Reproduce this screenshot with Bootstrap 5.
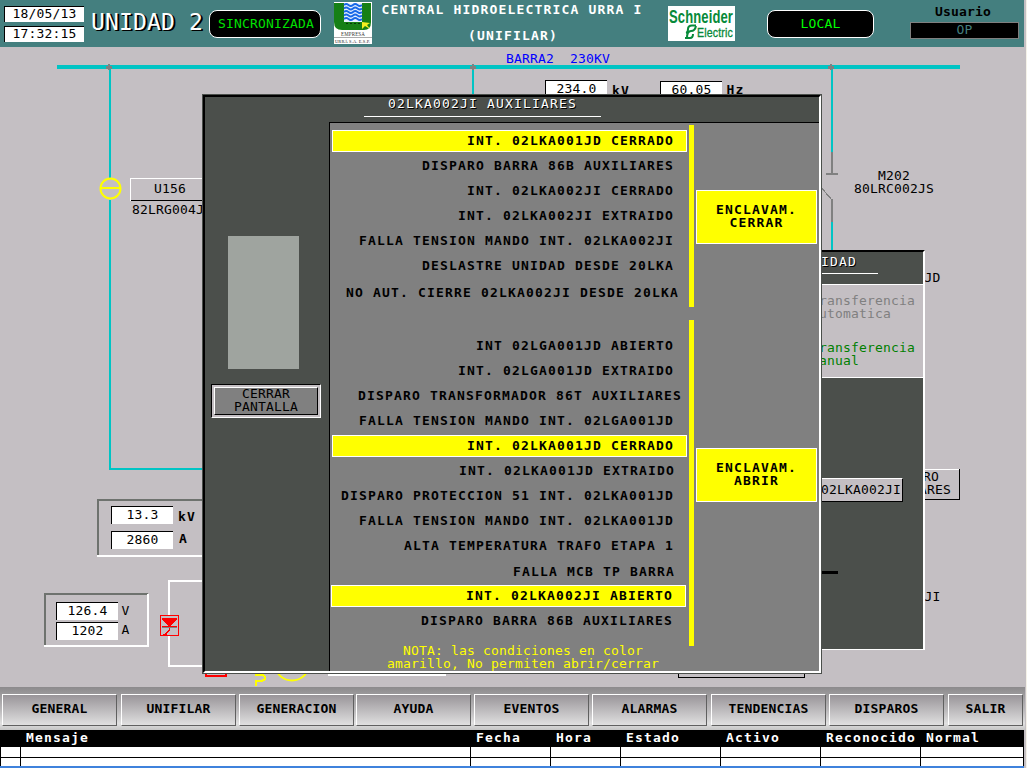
<!DOCTYPE html>
<html lang="es">
<head>
<meta charset="utf-8">
<meta name="viewport" content="width=device-width, initial-scale=1">
<title>Unidad 2 - Unifilar</title>
<link href="https://cdn.jsdelivr.net/npm/bootstrap@5.3.0/dist/css/bootstrap.min.css" rel="stylesheet">
<style>
:root{--teal:#447f7f;--bg:#c4bfc3;--dark:#4b4f4b;--mid:#808080;--cy:#00c4c4}
body{width:1027px;height:768px;overflow:hidden;background:#f4f1e8;color:#000;font:13px/13px "DejaVu Sans Mono","Liberation Mono",monospace;letter-spacing:.17px}
.screen{width:1026px;height:768px;background:var(--bg)}
.b9{font-weight:700;letter-spacing:1.17px}
.top-bar{width:1024px;height:47px;background:var(--teal)}
.clock{margin:6px 7px 0 4px;width:80px}
.stamp{height:16px;background:#fff;border:1px solid #000;border-width:1px 0 0 1px;text-align:center;line-height:13px}
.unit{width:118px;font-size:23px;line-height:24px;letter-spacing:.15px;margin-top:10px;color:#fff;text-shadow:1px 1px #000,2px 1px #000;white-space:pre}
.pill{height:28px;margin-top:10px;background:#000;border:1px solid #fff;border-radius:8px;color:#00e000;text-align:center;line-height:26px}
.pill-sync{width:112px;padding-left:2px}.pill-local{width:107px;margin-left:32px;color:#0f0}
.logo-urra{margin:2px 0 0 13px}
.heading{width:280px;margin:3px 0 0;text-align:center;color:#fff;white-space:nowrap}
.heading div+div{margin-top:13px;padding-left:2px}
.logo-se{margin:6px 0 0 16px}
.user{width:109px;margin:5px 0 0 36px;text-align:center}
.user>:first-child{padding-right:3px}
.user-name{height:17px;margin-top:4px;border:1px solid var(--mid);background:#000;color:var(--teal);line-height:14px}
.scene{height:640px}
.scene>svg{display:block}
.scene text{white-space:pre}
.val{font-size:13px;text-anchor:middle}
.unidad-win{left:700px;top:203px;width:225px;height:400px;background:var(--dark);border-top:2px solid #000;border-right:2px solid #fff;border-bottom:1px solid #fff}
.win-title{color:#fff;text-shadow:1px 1px #000;letter-spacing:1.17px}
.unidad-win .win-title{height:22px;padding:3px 0 0 103px;width:178px;border-bottom:1px solid #fff}
.mode{margin-top:10px;height:94px;border:1px solid #fff;border-width:1px 0;background:var(--bg);color:var(--mid);padding:9px 0 0 111px}
.mode .manual{margin-top:21px;color:#008000}
.tag-int{width:90px;height:24px;margin:100px 0 0 113px;background:var(--bg);border:1px solid #000;border-width:1px 1px 1px 0;border-top-color:#fff;text-align:right;line-height:21px;padding-right:1px}
.tag-bar{width:30px;height:3px;background:#000;margin:69px 0 0 108px}
.dialog{left:202px;top:47px;width:620px;height:580px;background:var(--dark);border:1px solid var(--dark)}
.dialog-in{width:618px;height:578px;border:2px solid #000;border-right-color:#fff;border-bottom-color:#fff}
.dialog .win-title{height:20px;margin-left:159px;width:237px;padding:0 0 0 24px;border-bottom:1px solid #fff;white-space:nowrap}
.dlg-body{padding-top:5px}
.side{width:124px;padding:114px 0 0 5px}
.lamp{width:71px;height:133px;margin-left:18px;background:#9fa49f}
.close-btn{width:110px;height:34px;margin-top:15px;margin-left:1px;border:1px solid #000;border-right-color:#fff;border-bottom-color:#fff;padding:2px;background:var(--bg)}
.close-btn div{height:28px;border:1px solid #fff;border-right-color:#000;border-bottom-color:#000;background:var(--mid);text-align:center;line-height:13px}
.close-btn span{position:relative;top:-1px}
.sheet{width:490px;height:549px;border:1px solid #000;border-width:1px 0 0 1px;background:var(--mid)}
.conds{width:358px;padding:7px 0 0 2px}
.cond{width:355px;height:22px;margin-bottom:3px;border:1px solid transparent;line-height:20px;text-align:right;padding-right:12px;white-space:nowrap}
.cond.on{background:#ff0;border-color:#fff}
.r5{padding-right:7px}.r8{padding-right:4px}.r1{padding-right:11px}.lf{margin-left:-1px}
.drop{position:relative;top:2px}.drop1{position:relative;top:1px}
.split{height:30px}
.note{color:#ff0;letter-spacing:.17px;text-align:center;margin-top:12px;white-space:nowrap;padding-left:26px}
.rails{width:5px;margin-top:2px;position:relative;left:1px}
.rail-a{height:182px;background:#ff0}.rail-b{height:326px;margin-top:13px;background:#ff0}
.encl{margin:67px 0 0 3px;width:121px}
.encl div{height:54px;border:1px solid #fff;background:#ff0;text-align:center;padding-top:12px}
.encl div+div{margin-top:204px}
.nav-strip{width:1025px;height:43px;padding:7px 0 0 2px;background:linear-gradient(#8c8a8c,#bdbbbd 55%,#e0e0e0 85%,#c4c4c4);}
.key{width:115px;height:32px;margin-right:3px;border:1px solid #fff;border-right:1px solid #606060;border-bottom:1px solid #606060;background:linear-gradient(#999599,#c0bec0 55%,#e0e0e0);font-weight:700;text-align:center;line-height:27px}
.key.g4{margin-right:4px}.key.g2{margin-right:2px}.key.last{width:75px;margin:0}
.alarm{width:1024px;height:38px;background:#fff;border-left:1px solid #000}
.alarm-row{display:grid;grid-template-columns:20px 450px 80px 70px 100px 100px 100px 103px;height:11px;border-bottom:1px solid #000}
.alarm-row>*{border-right:1px solid #000}
.alarm-row.hd{height:17px;background:#000;color:#fff;line-height:15px;padding:0}
.alarm-row.hd>*{padding-left:5px;border:0;white-space:nowrap}
.alarm-row.end{height:8px;border:0}
.os-edge{height:2px;margin-left:-1px;background:#3f82dc}
</style>
</head>
<body>
<div class="screen d-flex flex-column">
<header class="top-bar d-flex align-items-start flex-shrink-0">
  <div class="clock d-flex flex-column gap-1"><div class="stamp">18/05/13</div><div class="stamp">17:32:15</div></div>
  <div class="unit">UNIDAD 2</div>
  <div class="pill pill-sync">SINCRONIZADA</div>
  <svg class="logo-urra flex-shrink-0" width="38" height="42" viewBox="0 0 38 42">
    <rect width="38" height="42" fill="#fff"/>
    <path d="M0 1H10V20H28V1H37V20Q37 28 30 28H8Q0 28 0 20Z" fill="#168016"/>
    <rect x="10" y="1" width="18" height="19" fill="#e6f0ff"/>
    <path fill="none" stroke="#1768e8" stroke-width="1.700" d="M10 3q2.200-2 4.500 0t4.500 0t4.500 0t4.500 0M10 6.500q2.200-2 4.500 0t4.500 0t4.500 0t4.500 0M10 10q2.200-2 4.500 0t4.500 0t4.500 0t4.500 0M10 13.500q2.200-2 4.500 0t4.500 0t4.500 0t4.500 0M10 17q2.200-2 4.500 0t4.500 0t4.500 0t4.500 0"/>
    <path d="M12 21.500H28" stroke="#063806" stroke-dasharray="2 2"/>
    <path d="M28 20L36 21L33 23L36 27L31 24L28 27Z" fill="#f4ee20"/>
    <text x="7" y="34" font-family="Liberation Serif,serif" font-size="5.500" textLength="24" lengthAdjust="spacingAndGlyphs" fill="#333">EMPRESA</text>
    <path d="M0 35.500H38" stroke="#aaa"/>
    <text x="1" y="40.500" font-family="Liberation Serif,serif" font-size="5" textLength="35" lengthAdjust="spacingAndGlyphs" fill="#222">URRÁ S.A. E.S.P.</text>
  </svg>
  <div class="heading b9"><div>CENTRAL HIDROELECTRICA URRA I</div><div>(UNIFILAR)</div></div>
  <svg class="logo-se flex-shrink-0" width="67" height="35" viewBox="0 0 67 35">
    <rect width="67" height="35" fill="#fff"/>
    <text x="1" y="17" font-family="Liberation Sans,sans-serif" font-weight="700" font-size="18" textLength="64" lengthAdjust="spacingAndGlyphs" fill="#078a3a">Schneider</text>
    <g fill="none" stroke="#078a3a" stroke-width="2"><path d="M28 19.500H24Q20 19.500 20 23T18 27"/><path d="M28 20Q27 25 23 25T19 32M17 32H22Q25 32 25 28"/></g>
    <text x="29" y="31" font-family="Liberation Sans,sans-serif" font-size="12" textLength="36" lengthAdjust="spacingAndGlyphs" fill="#078a3a" stroke="#078a3a" stroke-width=".3">Electric</text>
  </svg>
  <div class="pill pill-local">LOCAL</div>
  <div class="user"><div class="fw-bold">Usuario</div><div class="user-name">OP</div></div>
</header>

<main class="scene position-relative flex-shrink-0">
<svg width="1026" height="640" viewBox="0 47 1026 640" shape-rendering="crispEdges">
  <!-- 230 kV bus and feeders -->
  <g fill="none" stroke="#00c4c4" stroke-width="2">
    <path d="M57 67H960" stroke-width="4"/>
    <path d="M110 69V178M110 200V469H203M473 69V96M832 69V152M832 222V251" />
  </g>
  <g fill="none" stroke="#808080" stroke-width="2"><path d="M832 152V173M826 174H838M832 199V222"/><path d="M820 186L831 199" stroke-width="1.300"/></g>
  <path d="M106 66h6v3h-6zM108 64h2v6h-2zM470 66h6v3h-6zM472 64h2v6h-2zM828 66h6v3h-6zM830 64h2v6h-2z" fill="#808080"/>
  <circle cx="110.500" cy="188.500" r="10" fill="none" stroke="#ff0" stroke-width="2" shape-rendering="auto"/><path d="M100 188H121" stroke="#ff0" stroke-width="2"/>
  <text x="506" y="63" fill="#00f">BARRA2  230KV</text>
  <!-- bus voltage and frequency -->
  <g><path d="M545 80H607V98H545Z" fill="#fff"/><path d="M545.500 98V80.500H607" fill="none" stroke="#000"/><text class="val" x="576.500" y="93">234.0</text><text class="b9" x="612" y="95">kV</text>
  <path d="M660 81H722V99H660Z" fill="#fff"/><path d="M660.500 98V81.500H722" fill="none" stroke="#000"/><text class="val" x="691.500" y="94">60.05</text><text class="b9" x="726.500" y="94">Hz</text></g>
  <!-- U156 disconnector -->
  <path d="M130.500 201V178.500H204" fill="none" stroke="#fff"/><path d="M131 200.500H204" stroke="#000"/>
  <text x="154" y="193">U156</text><text x="132" y="214">82LRG004JS</text>
  <!-- generator readings -->
  <path d="M98 556V500H204" fill="none" stroke="#6e726e" stroke-width="2"/><path d="M97 556H204" stroke="#fff" stroke-width="2"/>
  <path d="M111 506H173V524H111ZM111 531H173V549H111Z" fill="#fff"/><path d="M111.500 524V506.500H173M111.500 549V531.500H173" fill="none" stroke="#000"/>
  <text class="val" x="142.500" y="519">13.3</text><text class="val" x="142.500" y="544">2860</text><text class="b9" x="178" y="521">kV</text><text class="b9" x="179" y="543">A</text>
  <!-- excitation readings -->
  <path d="M45 645V594H148" fill="none" stroke="#6e726e" stroke-width="2"/><path d="M44 646H148V594" fill="none" stroke="#fff" stroke-width="2"/>
  <path d="M56 602H118V620H56ZM56 622H118V640H56Z" fill="#fff"/><path d="M56.500 620V602.500H118M56.500 640V622.500H118" fill="none" stroke="#000"/>
  <text class="val" x="87.500" y="615">126.4</text><text class="val" x="87.500" y="635">1202</text><text x="121.500" y="615">V</text><text x="121.500" y="634">A</text>
  <path d="M204 581H169V666H204" fill="none" stroke="#fff" stroke-width="2"/>
  <rect x="160.500" y="615.500" width="18" height="20" fill="#c4bfc3" stroke="#f00"/>
  <path d="M162 618H177V620L170 626L169 626L162 620Z" fill="#f00"/><path d="M162 626.500H177" stroke="#f00"/><path d="M162 627.500H177" stroke="#808080"/><path d="M169.500 628V630L166 634L163 635" fill="none" stroke="#f00" stroke-width="1.500"/>
  <path d="M206 670V676H226V670" fill="none" stroke="#f00" stroke-width="2"/>
  <path d="M255 675H263L265 677V679L262 681H256V686" fill="none" stroke="#ff0" stroke-width="2"/>
  <circle cx="292" cy="663" r="17.500" fill="none" stroke="#ff0" stroke-width="2" shape-rendering="auto"/>
  <path d="M328 675H446" stroke="#fff" stroke-width="2"/><path d="M678.500 670V677.500H804.500V670" fill="none" stroke="#000"/>
  <!-- right hand labels -->
  <text x="878" y="180">M202</text><text x="854" y="193">80LRC002JS</text>
  <text x="924.500" y="282">JD</text><text x="924.500" y="601">JI</text>
  <path d="M920 469.500H959" stroke="#fff"/><path d="M959.500 469V499.500H920" fill="none" stroke="#000"/>
  <text x="923" y="481">RO</text><text x="919" y="494">ARES</text>
</svg>

<section class="unidad-win position-absolute">
  <div class="win-title">UNIDAD</div>
  <div class="mode"><div>Transferencia<br>Automatica</div><div class="manual">Transferencia<br>Manual</div></div>
  <div class="tag-int">02LKA002JI</div>
  <div class="tag-bar"></div>
</section>

<section class="dialog position-absolute">
 <div class="dialog-in">
  <div class="win-title">02LKA002JI AUXILIARES</div>
  <div class="dlg-body d-flex">
   <div class="side flex-shrink-0">
     <div class="lamp"></div>
     <div class="close-btn"><div><span>CERRAR<br>PANTALLA</span></div></div>
   </div>
   <div class="sheet d-flex flex-shrink-0">
     <div class="conds b9 flex-shrink-0">
       <div class="cond on">INT. 02LKA001JD CERRADO</div>
       <div class="cond">DISPARO BARRA 86B AUXILIARES</div>
       <div class="cond">INT. 02LKA002JI CERRADO</div>
       <div class="cond">INT. 02LKA002JI EXTRAIDO</div>
       <div class="cond">FALLA TENSION MANDO INT. 02LKA002JI</div>
       <div class="cond">DESLASTRE UNIDAD DESDE 20LKA</div>
       <div class="cond r5 drop">NO AUT. CIERRE 02LKA002JI DESDE 20LKA</div>
       <div class="split"></div>
       <div class="cond">INT 02LGA001JD ABIERTO</div>
       <div class="cond">INT. 02LGA001JD EXTRAIDO</div>
       <div class="cond r8">DISPARO TRANSFORMADOR 86T AUXILIARES</div>
       <div class="cond">FALLA TENSION MANDO INT. 02LGA001JD</div>
       <div class="cond on">INT. 02LKA001JD CERRADO</div>
       <div class="cond r1">INT. 02LKA001JD EXTRAIDO</div>
       <div class="cond">DISPARO PROTECCION 51 INT. 02LKA001JD</div>
       <div class="cond">FALLA TENSION MANDO INT. 02LKA001JD</div>
       <div class="cond">ALTA TEMPERATURA TRAFO ETAPA 1</div>
       <div class="cond r1 drop1">FALLA MCB TP BARRA</div>
       <div class="cond on lf">INT. 02LKA002JI ABIERTO</div>
       <div class="cond lf">DISPARO BARRA 86B AUXILIARES</div>
       <div class="note fw-normal">NOTA: las condiciones en color<br>amarillo, No permiten abrir/cerrar</div>
     </div>
     <div class="rails flex-shrink-0"><div class="rail-a"></div><div class="rail-b"></div></div>
     <div class="encl b9 flex-shrink-0"><div>ENCLAVAM.<br>CERRAR</div><div>ENCLAVAM.<br>ABRIR</div></div>
   </div>
  </div>
 </div>
</section>
</main>

<nav class="nav-strip d-flex flex-shrink-0">
  <div class="key g4">GENERAL</div><div class="key">UNIFILAR</div><div class="key g2">GENERACION</div><div class="key">AYUDA</div><div class="key">EVENTOS</div><div class="key g4">ALARMAS</div><div class="key">TENDENCIAS</div><div class="key g4">DISPAROS</div><div class="key last">SALIR</div>
</nav>
<div class="alarm flex-shrink-0">
  <div class="alarm-row hd b9"><div></div><div>Mensaje</div><div>Fecha</div><div>Hora</div><div>Estado</div><div>Activo</div><div>Reconocido</div><div>Normal</div></div>
  <div class="alarm-row"><i></i><i></i><i></i><i></i><i></i><i></i><i></i><i></i></div>
  <div class="alarm-row end"><i></i><i></i><i></i><i></i><i></i><i></i><i></i><i></i></div>
  <div class="os-edge"></div>
</div>
</div>
<script src="https://cdn.jsdelivr.net/npm/bootstrap@5.3.0/dist/js/bootstrap.bundle.min.js"></script>
</body>
</html>
